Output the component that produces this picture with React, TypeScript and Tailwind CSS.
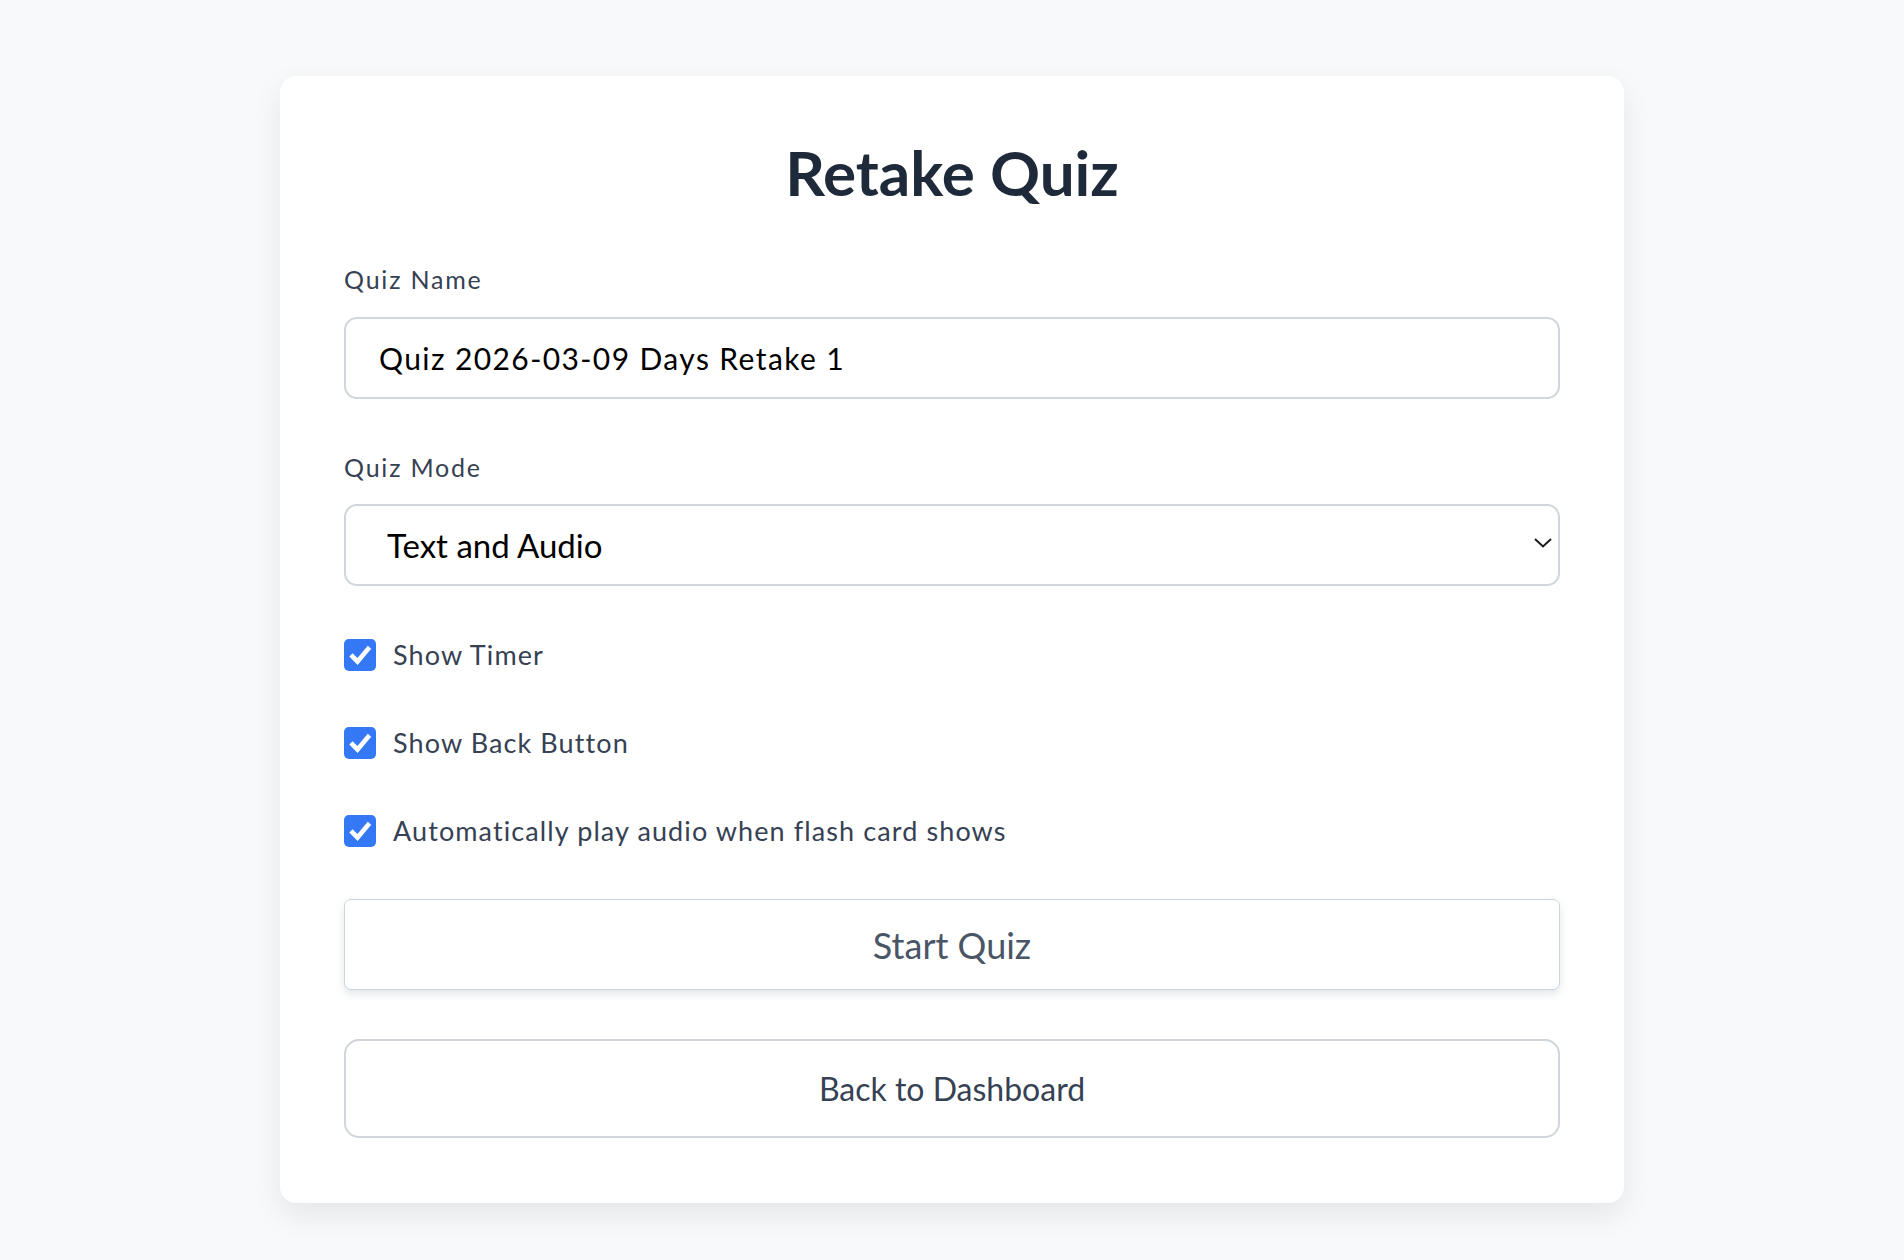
import React, { useState } from 'react';

const font = { fontFamily: 'Lato, "Noto Sans", sans-serif' };

const CheckRow = ({ label, checked, onToggle }: { label: string; checked: boolean; onToggle: () => void }) => (
    <label className="flex items-center gap-[17px] h-[32px] cursor-pointer select-none">
        <span onClick={onToggle} className={`w-[32px] h-[32px] rounded-[5px] flex items-center justify-center ${checked ? 'bg-[#3478f6]' : 'bg-white border-2 border-gray-400'}`}>
            {checked && (
                <svg width="32" height="32" viewBox="0 0 32 32">
                    <path d="M8.5 17.5 L13.5 22.5 L24 10" fill="none" stroke="#fff" strokeWidth="4.6" strokeLinecap="square" strokeLinejoin="miter" />
                </svg>
            )}
        </span>
        <span className="text-[27px] leading-[32px] tracking-[1.1px] text-gray-700">{label}</span>
    </label>
);

export default function App() {
    const [name, setName] = useState('Quiz 2026-03-09 Days Retake 1');
    const [mode, setMode] = useState('text_audio');
    const [opts, setOpts] = useState({ timer: true, back: true, autoplay: true });

    return (
        <div className="min-h-screen bg-[#f8f9fa] pt-[76px] pb-[57px]" style={font}>
            <div className="w-[1344px] mx-auto bg-white rounded-2xl shadow-[0_12px_30px_rgba(0,0,0,0.08)] px-16 pt-[59px] pb-[65px]">
                <h1 className="text-[62px] leading-[1.2] font-bold text-gray-800 text-center">Retake Quiz</h1>

                <label className="block mt-[55px] mb-[23px] text-[25px] leading-[30px] tracking-[1.8px] text-gray-700">Quiz Name</label>
                <input
                    className="w-full h-[82px] border-2 border-gray-300 rounded-[13px] pl-[33px] pr-6 text-[30px] tracking-[1.4px] text-black outline-none bg-white"
                    value={name}
                    onChange={e => setName(e.target.value)}
                />

                <label className="block mt-[53px] mb-[22px] text-[25px] leading-[30px] tracking-[1.8px] text-gray-700">Quiz Mode</label>
                <div className="relative">
                    <select
                        className="w-full h-[82px] appearance-none border-2 border-gray-300 rounded-[13px] pl-[41px] pr-12 text-[33px] text-black bg-white outline-none"
                        value={mode}
                        onChange={e => setMode(e.target.value)}
                    >
                        <option value="text_audio">Text and Audio</option>
                        <option value="text">Text Only</option>
                        <option value="audio">Audio Only</option>
                    </select>
                    <svg className="absolute right-[8px] top-[34px] pointer-events-none" width="18" height="10" viewBox="0 0 18 10">
                        <path d="M1 1 L9 8.5 L17 1" fill="none" stroke="#1a1a1a" strokeWidth="2" />
                    </svg>
                </div>

                <div className="mt-[53px] flex flex-col gap-[56px]">
                    <CheckRow label="Show Timer" checked={opts.timer} onToggle={() => setOpts({ ...opts, timer: !opts.timer })} />
                    <CheckRow label="Show Back Button" checked={opts.back} onToggle={() => setOpts({ ...opts, back: !opts.back })} />
                    <CheckRow label="Automatically play audio when flash card shows" checked={opts.autoplay} onToggle={() => setOpts({ ...opts, autoplay: !opts.autoplay })} />
                </div>

                <button className="mt-[52px] w-full h-[91px] border-[1.5px] border-slate-300 rounded-[7px] bg-white shadow-[0_4px_8px_rgba(100,116,139,0.18)] text-[36px] text-gray-600">
                    Start Quiz
                </button>

                <button className="mt-[49px] w-full h-[99px] border-2 border-gray-300 rounded-[15px] bg-white text-[32px] text-gray-700">
                    Back to Dashboard
                </button>
            </div>
        </div>
    );
}
